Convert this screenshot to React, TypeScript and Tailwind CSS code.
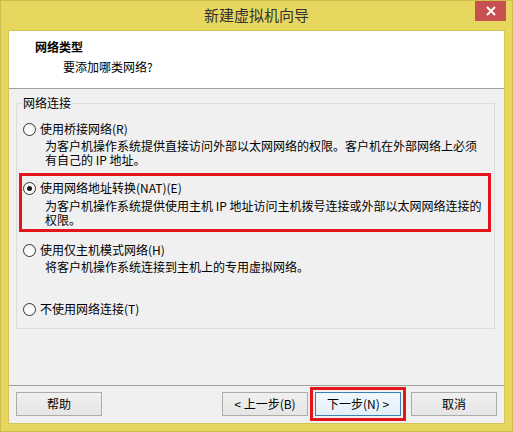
const font = { fontFamily: '"Noto Sans CJK SC", "Liberation Sans", sans-serif' };

function Radio({ checked }: { checked?: boolean }) {
  return (
    <span className="flex h-[13px] w-[13px] shrink-0 items-center justify-center rounded-full border border-[#333333] bg-gradient-to-b from-[#f4f4f4] to-[#ffffff]">
      {checked && <span className="h-[5px] w-[5px] rounded-full bg-[#1a1a1a]" />}
    </span>
  );
}

function Btn({ label, active }: { label: string; active?: boolean }) {
  return (
    <button
      type="button"
      className={`h-[24px] w-[86px] border text-[12px] leading-none text-black ${
        active
          ? 'border-[#3c7fb1] bg-gradient-to-b from-[#f2f8fd] to-[#e3eff9]'
          : 'border-[#acacac] bg-gradient-to-b from-[#f0f0f0] to-[#e5e5e5]'
      }`}
    >
      {label}
    </button>
  );
}

export default function App() {
  return (
    <div
      className="flex h-[432px] w-[513px] flex-col border border-[#cdbd4c] bg-[#e7d75e] text-[12px] text-black"
      style={font}
    >
      {/* Title bar */}
      <div className="relative flex h-[29px] shrink-0 items-center justify-center">
        <span className="text-[15px] text-[#333333]">新建虚拟机向导</span>
        <div className="absolute right-[6px] top-0 flex h-[20px] w-[31px] items-center justify-center bg-[#c75050]">
          <svg width="10" height="10" viewBox="0 0 10 10">
            <path d="M1 1 L9 9 M9 1 L1 9" stroke="#ffffff" strokeWidth="2" />
          </svg>
        </div>
      </div>

      {/* Content */}
      <div className="mx-[7px] mb-[7px] flex flex-1 flex-col border border-[#d3c453] bg-[#f0f0f0]">
        {/* Header */}
        <div className="h-[58px] shrink-0 border-b border-[#a0a0a0] bg-white pl-[26px] pt-[8px]">
          <div className="text-[12px] font-bold leading-[16px]">网络类型</div>
          <div className="mt-[4px] pl-[28px] leading-[16px]">要添加哪类网络?</div>
        </div>

        {/* Body */}
        <div className="flex flex-1 flex-col">
          <fieldset className="ml-[7px] mr-[9px] mt-[6px] border border-[#dcdcdc] pb-[11px]">
            <legend className="ml-[5px] px-[1px] leading-[16px]">网络连接</legend>

            {/* Bridged */}
            <div className="mt-[10px] pl-[6px]">
              <div className="flex h-[16px] items-center gap-[4px]">
                <Radio />
                <span>使用桥接网络(R)</span>
              </div>
              <div className="mt-[2px] pl-[22px] leading-[14px]">
                为客户机操作系统提供直接访问外部以太网网络的权限。客户机在外部网络上必须
                <br />
                有自己的 IP 地址。
              </div>
            </div>

            {/* NAT */}
            <div className="ml-[2px] mr-[3px] mt-[6px] border-[3px] border-[#e4141b] pb-[2px] pl-[1px] pt-[4px]">
              <div className="flex h-[16px] items-center gap-[4px]">
                <Radio checked />
                <span>使用网络地址转换(NAT)(E)</span>
              </div>
              <div className="mt-[3px] pl-[22px] leading-[14px]">
                为客户机操作系统提供使用主机 IP 地址访问主机拨号连接或外部以太网网络连接的
                <br />
                权限。
              </div>
            </div>

            {/* Host-only */}
            <div className="mt-[10px] pl-[6px]">
              <div className="flex h-[16px] items-center gap-[4px]">
                <Radio />
                <span>使用仅主机模式网络(H)</span>
              </div>
              <div className="mt-[2px] pl-[22px] leading-[14px]">
                将客户机操作系统连接到主机上的专用虚拟网络。
              </div>
            </div>

            {/* None */}
            <div className="mt-[27px] pl-[6px]">
              <div className="flex h-[16px] items-center gap-[4px]">
                <Radio />
                <span>不使用网络连接(T)</span>
              </div>
            </div>
          </fieldset>

          <div className="flex-1" />

          {/* Footer */}
          <div className="flex shrink-0 items-center border-t border-[#a0a0a0] px-[7px] pb-[7px] pt-[6px]">
            <Btn label="帮助" />
            <div className="flex-1" />
            <Btn label="< 上一步(B)" />
            <div className="relative ml-[7px]">
              <Btn label="下一步(N) >" active />
              <div className="pointer-events-none absolute -inset-[5px] border-[3px] border-[#e4141b]" />
            </div>
            <div className="ml-[10px]">
              <Btn label="取消" />
            </div>
          </div>
        </div>
      </div>
    </div>
  );
}
